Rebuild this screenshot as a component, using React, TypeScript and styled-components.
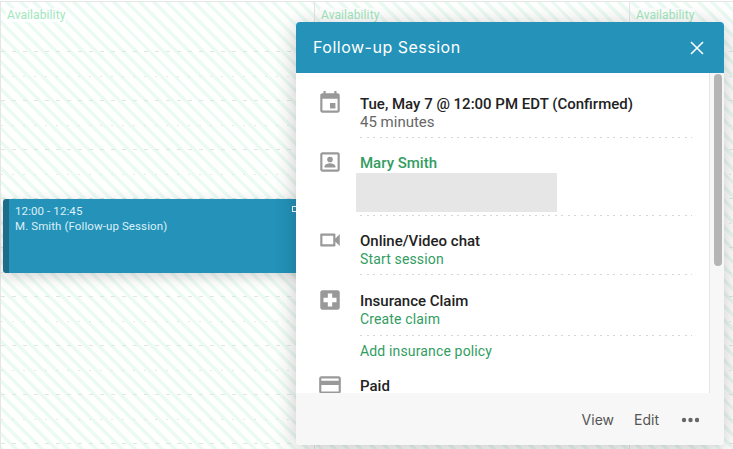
import React from "react";
import styled, { createGlobalStyle } from "styled-components";

const Global = createGlobalStyle`
  html, body { margin: 0; padding: 0; background: #fff; }
  body { font-family: Roboto, "Liberation Sans", sans-serif; }
`;

const Page = styled.div`
  position: relative;
  width: 733px;
  height: 449px;
  overflow: hidden;
  background: #fff;
`;

const Calendar = styled.div`
  display: grid;
  grid-template-columns: 314px 315px 104px;
  height: 448px;
  margin-top: 1px;
  border-top: 1px solid #e6e6e6;
`;

const DayColumn = styled.div`
  position: relative;
  border-left: 1px solid #e6e6e6;
  background: repeating-linear-gradient(
    45deg,
    #ebfaf2 0 3.5px,
    #ffffff 3.5px 9.4px
  );
  background-attachment: fixed;
`;

const AvailabilityLabel = styled.span`
  position: absolute;
  top: 6px;
  left: 5px;
  font-size: 12px;
  line-height: 14px;
  letter-spacing: 0.1px;
  color: #9fe7bc;
  background: rgba(255, 255, 255, 0.75);
  padding: 0 1px;
`;

const HourSlot = styled.div<{ $first?: boolean }>`
  position: relative;
  box-sizing: border-box;
  height: ${(p) => (p.$first ? 50 : 49)}px;
  background: repeating-linear-gradient(
      90deg,
      #dde8e2 0 4px,
      transparent 4px 11px
    )
    left bottom / 100% 1px no-repeat;
  &::after {
    content: "";
    display: ${(p) => (p.$first ? "none" : "block")};
    position: absolute;
    left: 0;
    right: 0;
    top: 24px;
    height: 1px;
    background: repeating-linear-gradient(
      90deg,
      #e3ebe6 0 2px,
      transparent 2px 11px
    );
  }
`;

const EventCard = styled.div`
  position: absolute;
  top: 197px;
  left: 2px;
  box-sizing: border-box;
  width: 312px;
  height: 74px;
  padding: 5px 0 0 6px;
  background: #2492b9;
  border-left: 6px solid #1d6d8a;
  border-radius: 3px;
  box-shadow: 0 4px 14px rgba(0, 0, 0, 0.16);
  color: #dcf0f7;
  font-size: 11.5px;
  line-height: 15px;
  letter-spacing: 0.1px;
`;

const EventLine = styled.div``;

const EventMarker = styled.span`
  position: absolute;
  top: 7px;
  right: 17px;
  box-sizing: border-box;
  width: 6px;
  height: 6px;
  border: 1px solid #fff;
`;

const Popup = styled.div`
  position: absolute;
  left: 296px;
  top: 22px;
  width: 428px;
  height: 423px;
  display: flex;
  flex-direction: column;
  background: #fff;
  border-radius: 4px;
  overflow: hidden;
  box-shadow: 0 4px 22px rgba(0, 0, 0, 0.22);
`;

const PopupHeader = styled.header`
  flex: 0 0 51px;
  display: flex;
  align-items: center;
  justify-content: space-between;
  padding: 0 19px 0 17px;
  background: #2492b9;
  color: #fff;
`;

const PopupTitle = styled.h2`
  margin: 0 0 2px;
  font-family: Inter, sans-serif;
  font-size: 16px;
  font-weight: 400;
  letter-spacing: 0.5px;
`;

const CloseIcon = styled.svg`
  display: block;
  width: 16px;
  height: 16px;
  stroke: #fff;
  stroke-width: 1.6;
  fill: none;
`;

const PopupBody = styled.div`
  flex: 1;
  min-height: 0;
  display: flex;
  overflow: hidden;
`;

const Content = styled.div`
  flex: 1;
  min-width: 0;
  padding: 22px 17px 0 64px;
`;

const Section = styled.section<{ $gap?: number }>`
  position: relative;
  margin-top: ${(p) => p.$gap ?? 0}px;
`;

const SectionIcon = styled.svg`
  position: absolute;
  left: -43px;
  top: -5px;
  width: 26px;
  height: 26px;
  fill: #999;
`;

const Title = styled.div`
  font-size: 15px;
  line-height: 18px;
  font-weight: 500;
  color: #222;
`;

const SubText = styled.div`
  font-size: 15px;
  line-height: 18px;
  color: #666;
`;

const GreenLink = styled.div<{ $strong?: boolean }>`
  line-height: 18px;
  letter-spacing: ${(p) => (p.$strong ? 0 : 0.15)}px;
  color: #329d62;
  font-weight: ${(p) => (p.$strong ? 500 : 400)};
  font-size: ${(p) => (p.$strong ? 15 : 14)}px;
`;

const Redacted = styled.div`
  width: 201px;
  height: 39px;
  margin: 1px 0 3px -4px;
  background: #e6e6e6;
`;

const Divider = styled.div<{ $top?: number }>`
  margin-top: ${(p) => p.$top ?? 6}px;
  height: 1px;
  background: repeating-linear-gradient(
    90deg,
    #d6d6d6 0 2px,
    transparent 2px 6.5px
  );
`;

const ScrollTrack = styled.div`
  flex: 0 0 14px;
  box-sizing: border-box;
  padding: 1px 2px 0 4px;
  background: #f7f7f7;
  border-left: 1px solid #e4e4e4;
`;

const ScrollThumb = styled.div`
  width: 8px;
  height: 192px;
  border-radius: 4px;
  background: #b5b5b5;
`;

const PopupFooter = styled.footer`
  flex: 0 0 52px;
  display: flex;
  align-items: center;
  justify-content: flex-end;
  gap: 20px;
  padding: 0 25px 0 0;
  background: #f7f7f7;
`;

const FooterAction = styled.span`
  font-family: Inter, sans-serif;
  font-size: 14px;
  color: #555;
`;

const MoreDots = styled.svg`
  display: block;
  width: 18px;
  height: 6px;
  margin: 2px 0 0 2px;
  fill: #666;
`;

const hours = Array.from({ length: 10 });

function Column({ children }: { children?: React.ReactNode }) {
  return (
    <DayColumn>
      {hours.map((_, i) => (
        <HourSlot key={i} $first={i === 0} />
      ))}
      <AvailabilityLabel>Availability</AvailabilityLabel>
      {children}
    </DayColumn>
  );
}

export default function App() {
  return (
    <Page>
      <Global />
      <Calendar>
        <Column>
          <EventCard>
            <EventLine>12:00 - 12:45</EventLine>
            <EventLine>M. Smith (Follow-up Session)</EventLine>
            <EventMarker />
          </EventCard>
        </Column>
        <Column />
        <Column />
      </Calendar>

      <Popup>
        <PopupHeader>
          <PopupTitle>Follow-up Session</PopupTitle>
          <CloseIcon viewBox="0 0 16 16">
            <path d="M2 2l12 12M14 2L2 14" />
          </CloseIcon>
        </PopupHeader>
        <PopupBody>
          <Content>
            <Section>
              <SectionIcon viewBox="0 0 24 24">
                <path d="M17 12h-5v5h5v-5zM16 1v2H8V1H6v2H5c-1.11 0-1.99.9-1.99 2L3 19c0 1.1.89 2 2 2h14c1.1 0 2-.9 2-2V5c0-1.1-.9-2-2-2h-1V1h-2zm3 18H5V8h14v11z" />
              </SectionIcon>
              <Title>Tue, May 7 @ 12:00 PM EDT (Confirmed)</Title>
              <SubText>45 minutes</SubText>
              <Divider />
            </Section>
            <Section $gap={16}>
              <SectionIcon viewBox="0 0 24 24">
                <path d="M19 5v14H5V5h14m0-2H5c-1.11 0-2 .9-2 2v14c0 1.1.89 2 2 2h14c1.1 0 2-.9 2-2V5c0-1.1-.89-2-2-2z" />
                <circle cx="12" cy="9.7" r="2.6" />
                <path d="M7 17v-1c0-1.9 3.3-2.9 5-2.9s5 1 5 2.9v1z" />
              </SectionIcon>
              <GreenLink $strong>Mary Smith</GreenLink>
              <Redacted />
              <Divider $top={0} />
            </Section>
            <Section $gap={16}>
              <SectionIcon viewBox="0 0 24 24">
                <path d="M15 8v8H5V8h10m1-2H4c-.55 0-1 .45-1 1v10c0 .55.45 1 1 1h12c.55 0 1-.45 1-1v-3.5l4 4v-11l-4 4V7c0-.55-.45-1-1-1z" />
              </SectionIcon>
              <Title>Online/Video chat</Title>
              <GreenLink>Start session</GreenLink>
              <Divider />
            </Section>
            <Section $gap={17}>
              <SectionIcon viewBox="0 0 24 24">
                <path d="M19 3H5c-1.1 0-1.99.9-1.99 2L3 19c0 1.1.9 2 2 2h14c1.1 0 2-.9 2-2V5c0-1.1-.9-2-2-2zm-1 11h-4v4h-4v-4H6v-4h4V6h4v4h4v4z" />
              </SectionIcon>
              <Title>Insurance Claim</Title>
              <GreenLink>Create claim</GreenLink>
              <Divider $top={7} />
              <Section $gap={6}>
                <GreenLink>Add insurance policy</GreenLink>
              </Section>
            </Section>
            <Section $gap={17}>
              <SectionIcon viewBox="0 0 24 24">
                <path d="M20 4H4c-1.11 0-1.99.89-1.99 2L2 18c0 1.11.89 2 2 2h16c1.11 0 2-.89 2-2V6c0-1.11-.89-2-2-2zm0 14H4v-6h16v6zm0-10H4V6h16v2z" />
              </SectionIcon>
              <Title>Paid</Title>
            </Section>
          </Content>
          <ScrollTrack>
            <ScrollThumb />
          </ScrollTrack>
        </PopupBody>
        <PopupFooter>
          <FooterAction>View</FooterAction>
          <FooterAction>Edit</FooterAction>
          <MoreDots viewBox="0 0 18 6">
            <circle cx="3" cy="3" r="2.2" />
            <circle cx="9.5" cy="3" r="2.2" />
            <circle cx="16" cy="3" r="2.2" />
          </MoreDots>
        </PopupFooter>
      </Popup>
    </Page>
  );
}
